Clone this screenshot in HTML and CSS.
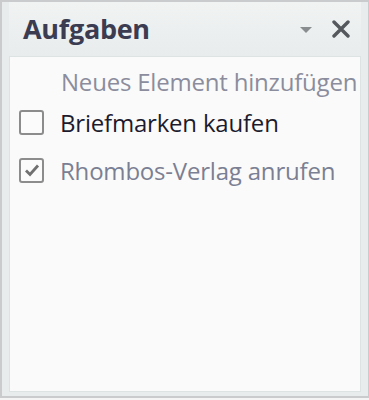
FILE: index.html
```html
<!DOCTYPE html>
<html lang="de">
<head>
  <meta charset="UTF-8" />
  <title>Aufgaben</title>
  <link rel="stylesheet" href="styles.css">
</head>
<body>
  <div class="panel">
    <div class="header">
      <span class="title">Aufgaben</span>
      <span class="tools">
        <svg class="drop" width="12" height="6" viewBox="0 0 12 6"><path d="M0 0h12L6 6z" fill="#8a8d90"/></svg>
        <svg class="close" width="18" height="18" viewBox="0 0 18 18"><path d="M2 2L16 16M16 2L2 16" stroke="#55585c" stroke-width="3.4" stroke-linecap="round"/></svg>
      </span>
    </div>
    <div class="content">
      <div class="new-item">Neues Element hinzufügen</div>
      <label class="task">
        <span class="box"></span>
        <span class="open">Briefmarken kaufen</span>
      </label>
      <label class="task">
        <span class="box">
          <svg width="18" height="18" viewBox="0 0 18 18"><path d="M3 9.5L7 13.5L15 4.5" fill="none" stroke="#707070" stroke-width="2.8"/></svg>
        </span>
        <span class="done">Rhombos-Verlag anrufen</span>
      </label>
    </div>
  </div>
</body>
</html>
```
FILE: styles.css
```css
body {
  margin: 0;
  font-family: "Open Sans", "Liberation Sans", sans-serif;
  background: #f4f4f4;
}
.panel {
  width: 369px;
  height: 398px;
  box-sizing: border-box;
  border: 2px solid #c9cbcc;
  border-right-width: 1px;
  background: #e8ecec;
  padding: 0 7px 4px;
  display: flex;
  flex-direction: column;
}
.header {
  height: 54px;
  flex: none;
  display: flex;
  align-items: center;
  justify-content: space-between;
  padding: 0 11px 0 14px;
  background: linear-gradient(#f1f3f3, #e8ecec);
}
.title {
  font-size: 27px;
  font-weight: 700;
  color: #3b3c52;
  letter-spacing: -0.3px;
  margin-top: -2px;
}
.tools {
  display: flex;
  align-items: center;
  gap: 20px;
}
.drop {
  margin-top: 2px;
}
.content {
  flex: 1;
  background: #fafafa;
  border: 1px solid #dde2e2;
  padding: 8px 0 0 9px;
}
.new-item {
  font-size: 24px;
  color: #8b8d9d;
  padding-left: 42px;
  height: 34px;
  line-height: 34px;
  letter-spacing: -0.2px;
}
.task {
  display: flex;
  align-items: center;
  gap: 16px;
  height: 46px;
  font-size: 24px;
  letter-spacing: -0.2px;
}
.task + .task {
  height: 50px;
}
.box {
  width: 21px;
  height: 21px;
  border: 2px solid #8c8c8c;
  border-radius: 3px;
  background: #fbfbfb;
  display: flex;
  align-items: center;
  justify-content: center;
}
.open {
  color: #1d1a2e;
}
.done {
  color: #7b7f93;
}
```
